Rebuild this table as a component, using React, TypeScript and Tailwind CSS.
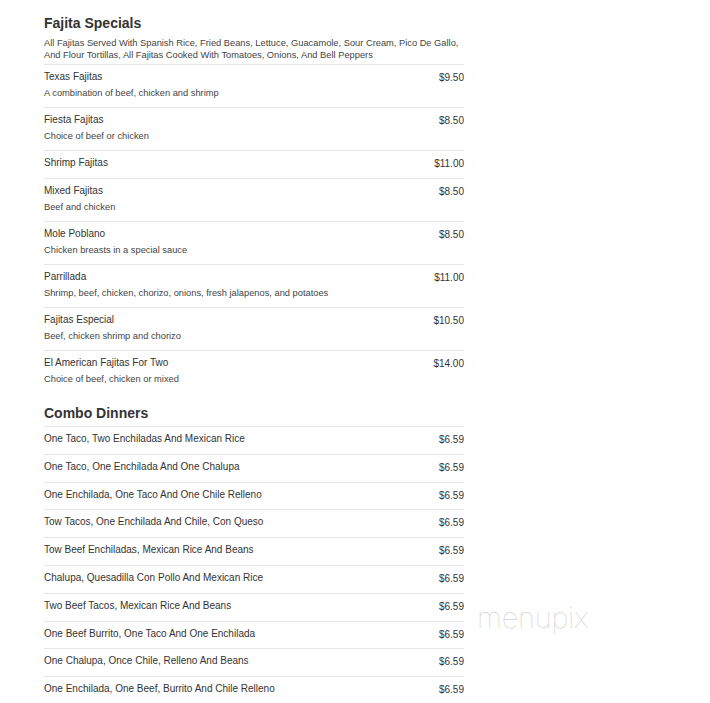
import React from "react";

type Item = { name: string; price: string; desc?: string };

const fajitas: Item[] = [
  { name: "Texas Fajitas", price: "$9.50", desc: "A combination of beef, chicken and shrimp" },
  { name: "Fiesta Fajitas", price: "$8.50", desc: "Choice of beef or chicken" },
  { name: "Shrimp Fajitas", price: "$11.00" },
  { name: "Mixed Fajitas", price: "$8.50", desc: "Beef and chicken" },
  { name: "Mole Poblano", price: "$8.50", desc: "Chicken breasts in a special sauce" },
  { name: "Parrillada", price: "$11.00", desc: "Shrimp, beef, chicken, chorizo, onions, fresh jalapenos, and potatoes" },
  { name: "Fajitas Especial", price: "$10.50", desc: "Beef, chicken shrimp and chorizo" },
  { name: "El American Fajitas For Two", price: "$14.00", desc: "Choice of beef, chicken or mixed" },
];

const combos: string[] = [
  "One Taco, Two Enchiladas And Mexican Rice",
  "One Taco, One Enchilada And One Chalupa",
  "One Enchilada, One Taco And One Chile Relleno",
  "Tow Tacos, One Enchilada And Chile, Con Queso",
  "Tow Beef Enchiladas, Mexican Rice And Beans",
  "Chalupa, Quesadilla Con Pollo And Mexican Rice",
  "Two Beef Tacos, Mexican Rice And Beans",
  "One Beef Burrito, One Taco And One Enchilada",
  "One Chalupa, Once Chile, Relleno And Beans",
  "One Enchilada, One Beef, Burrito And Chile Relleno",
];

const Row = ({ item }: { item: Item }) => (
  <div className={`border-t border-[#e6e6e6] pt-[4px] ${item.desc ? "pb-[6px]" : "pb-[7px]"}`}>
    <div className="flex justify-between h-[16px] leading-[16px] text-[10px] text-[#333]">
      <span>{item.name}</span>
      <span className="pt-[1px]">{item.price}</span>
    </div>
    {item.desc && <div className="leading-[16px] text-[9.3px] text-[#444]">{item.desc}</div>}
  </div>
);

const App = () => {
  return (
    <div className="relative w-[710px] h-[703px] overflow-hidden bg-white font-['Liberation_Sans',Arial,sans-serif]">
      <div className="w-[420px] ml-[44px] pt-[14px]">
        <h2 className="text-[14px] leading-[18px] font-bold text-[#333]">Fajita Specials</h2>
        <p className="mt-[5px] mb-[3px] -mr-[4px] text-[9.3px] leading-[12px] text-[#444]">
          All Fajitas Served With Spanish Rice, Fried Beans, Lettuce, Guacamole, Sour Cream, Pico De Gallo, And
          Flour Tortillas, All Fajitas Cooked With Tomatoes, Onions, And Bell Peppers
        </p>
        {fajitas.map((f) => (
          <Row key={f.name} item={f} />
        ))}

        <h2 className="mt-[11px] mb-[4px] text-[14px] leading-[18px] font-bold text-[#333]">Combo Dinners</h2>
        {combos.map((c) => (
          <div
            key={c}
            className="h-[27.8px] border-t border-[#e6e6e6] pt-[4px] flex justify-between leading-[16px] text-[10px] text-[#333]"
          >
            <span className="h-[16px]">{c}</span>
            <span className="h-[16px] pt-[1px]">$6.59</span>
          </div>
        ))}
      </div>

      {/* watermark overlay */}
      <div className="absolute left-[477px] top-[602px] text-[29px] leading-[32px] font-['Inter',sans-serif] font-thin text-[#d4d4d4] tracking-[-0.3px]">
        menupix
      </div>
    </div>
  );
};

export default App;
